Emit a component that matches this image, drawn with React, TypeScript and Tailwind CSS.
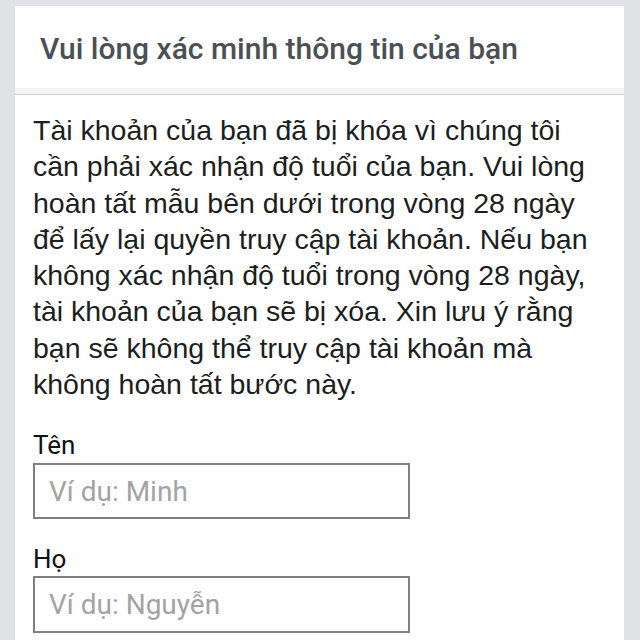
export default function App() {
	return (
		<div className="h-[640px] w-[640px] overflow-hidden bg-[#e0e2e6] pl-[15px] pr-[16px] pt-[6px]">
			<div className="bg-white">
				{/* Header */}
				<div className="flex h-[82px] items-center pl-[25px] pt-[4px]">
					<h1 className="font-['Roboto',sans-serif] text-[30px] font-medium leading-none text-[#4b4f56]">
						Vui lòng xác minh thông tin của bạn
					</h1>
				</div>
				<div className="h-[6px] bg-[#f2f3f5]" />
				<div className="h-px bg-[#cfd1d5]" />

				{/* Body */}
				<div className="pl-[18px] pr-[14px] pt-[17px] pb-2">
					<p className="font-['Liberation_Sans',Arial,sans-serif] text-[28.5px] leading-[36.3px] text-[#1c1e21]">
						Tài khoản của bạn đã bị khóa vì chúng tôi cần phải xác nhận độ tuổi của bạn. Vui lòng hoàn tất mẫu bên dưới trong vòng 28 ngày để lấy lại quyền truy cập tài khoản. Nếu bạn không xác nhận độ tuổi trong vòng 28 ngày, tài khoản của bạn sẽ bị xóa. Xin lưu ý rằng bạn sẽ không thể truy cập tài khoản mà không hoàn tất bước này.
					</p>

					<div className="mt-[27px] flex flex-col font-['Roboto',sans-serif]">
						<label className="text-[26px] leading-[32px] text-[#111]">Tên</label>
						<input
							className="mt-[2px] h-[56px] w-[377px] border-2 border-[#808080] bg-white pl-[14px] text-[28px] text-[#1c1e21] outline-none placeholder:text-[#a3a3a3]"
							placeholder="Ví dụ: Minh"
						/>
						<label className="mt-[24px] text-[26px] leading-[32px] text-[#111]">Họ</label>
						<input
							className="mt-[1px] h-[57px] w-[377px] border-2 border-[#808080] bg-white pl-[14px] text-[28px] text-[#1c1e21] outline-none placeholder:text-[#a3a3a3]"
							placeholder="Ví dụ: Nguyễn"
						/>
					</div>
				</div>
			</div>
		</div>
	);
}
